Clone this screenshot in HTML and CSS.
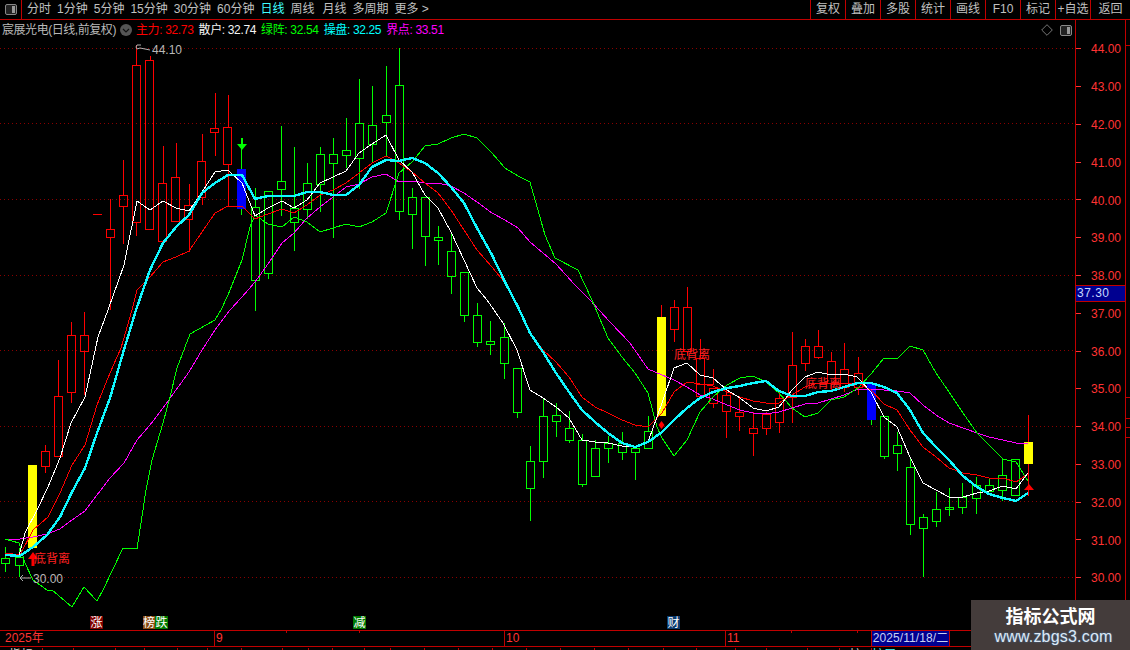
FILE: index.html
```html
<!DOCTYPE html>
<html lang="zh">
<head>
<meta charset="utf-8">
<title>宸展光电</title>
<link rel="stylesheet" href="styles.css">
</head>
<body>
<div class="app">
  <header class="toolbar">
    <div class="toggle-cell">
      <svg class="layout-icon" viewBox="0 0 12 11"><rect x="0.5" y="0.5" width="11" height="10" rx="1.5" class="li-frame"/><rect x="7" y="2" width="3" height="7" class="li-fill"/></svg>
    </div>
    <nav class="periods">
      <span>分时</span><span>1分钟</span><span>5分钟</span><span>15分钟</span><span>30分钟</span><span>60分钟</span><span class="active">日线</span><span>周线</span><span class="wide">月线</span><span>多周期</span><span>更多 &gt;</span>
    </nav>
    <nav class="actions">
      <span>复权</span><span>叠加</span><span>多股</span><span>统计</span><span>画线</span><span>F10</span><span>标记</span><span>+自选</span><span>返回</span>
    </nav>
  </header>

  <main class="main">
    <section class="chart">
      <div class="legend">
        <span class="stock">宸展光电(日线,前复权)</span>
        <svg class="chev" viewBox="0 0 12 12"><circle cx="6" cy="6" r="6" fill="#555"/><path d="M3 5l3 3 3-3" fill="none" stroke="#111" stroke-width="1.2"/></svg>
        <span class="val c-red">主力: 32.73</span>
        <span class="val c-white">散户: 32.74</span>
        <span class="val c-green">绿阵: 32.54</span>
        <span class="val c-cyan">操盘: 32.25</span>
        <span class="val c-mag">界点: 33.51</span>
      </div>
      <div class="corner-icons">
        <svg class="diamond" viewBox="0 0 12 12"><path d="M6 .7L11.3 6 6 11.3.7 6z" fill="none" stroke="#777"/></svg>
        <svg class="layout-icon" viewBox="0 0 12 11"><rect x="0.5" y="0.5" width="11" height="10" rx="1.5" class="li-frame"/><rect x="7" y="2" width="3" height="7" class="li-fill"/></svg>
      </div>
      <svg class="plot" viewBox="0 20 1075 610" width="1075" height="610">
        <path class="grid" d="M0 48.5H1075M0 123.5H1075M0 199.5H1075M0 275.5H1075M0 350.5H1075M0 426.5H1075M0 501.5H1075M0 577.5H1075"/>

        <!-- green candles -->
        <g class="crisp up-green">
          <path class="wick" d="M5.5 547V558M5.5 563V572M19.5 548V557M19.5 566V577M241.5 138V215M255.5 188V207M255.5 280V311M268.5 273V279M281.5 126V181M281.5 190V216M294.5 147V208M294.5 222V251M307.5 163V183M307.5 209V219M320.5 147V154M320.5 184V212M333.5 138V154M333.5 163V238M346.5 118V150M346.5 156V168M359.5 79V123M359.5 159V189M372.5 86V125M372.5 145V163M386.5 66V115M386.5 123V157M399.5 48V85M399.5 212V220M412.5 188V197M412.5 215V249M425.5 237V266M438.5 226V237M438.5 241V265M451.5 233V251M451.5 277V294M464.5 315V322M477.5 303V315M477.5 343V347M490.5 321V341M490.5 345V355M504.5 323V337M504.5 363V379M517.5 413V418M530.5 446V461M530.5 488V521M543.5 399V416M543.5 462V478M556.5 403V415M556.5 421V437M569.5 411V428M569.5 441V443M582.5 434V440M582.5 485V487M595.5 440V448M608.5 436V443M608.5 448V463M622.5 432V443M622.5 453V460M635.5 447V448M635.5 453V480M648.5 416V431M871.5 419V425M884.5 457V459M897.5 432V445M897.5 454V471M910.5 458V467M910.5 524V535M923.5 514V517M923.5 529V577M936.5 492V509M936.5 521V527M949.5 488V516M962.5 483V498M962.5 508V514M976.5 477V485M976.5 498V514M989.5 479V485M1002.5 459V475M1002.5 491V501"/>
          <path class="body" d="M1.5 558.5h8v5h-8zM15.5 557.5h8v8h-8zM251.5 207.5h8v73h-8zM264.5 191.5h8v82h-8zM277.5 181.5h8v8h-8zM290.5 208.5h8v14h-8zM303.5 183.5h8v26h-8zM316.5 154.5h8v30h-8zM329.5 154.5h8v9h-8zM342.5 150.5h8v5h-8zM355.5 123.5h8v35h-8zM368.5 125.5h8v19h-8zM382.5 115.5h8v7h-8zM395.5 85.5h8v126h-8zM408.5 197.5h8v17h-8zM421.5 197.5h8v39h-8zM434.5 237.5h8v3h-8zM447.5 251.5h8v25h-8zM460.5 272.5h8v43h-8zM473.5 315.5h8v27h-8zM486.5 341.5h8v3h-8zM500.5 337.5h8v26h-8zM513.5 368.5h8v44h-8zM526.5 461.5h8v27h-8zM539.5 416.5h8v45h-8zM552.5 415.5h8v6h-8zM565.5 428.5h8v12h-8zM578.5 440.5h8v44h-8zM591.5 448.5h8v28h-8zM604.5 443.5h8v5h-8zM618.5 443.5h8v9h-8zM631.5 448.5h8v4h-8zM644.5 431.5h8v17h-8zM880.5 416.5h8v40h-8zM893.5 445.5h8v8h-8zM906.5 467.5h8v57h-8zM919.5 517.5h8v11h-8zM932.5 509.5h8v12h-8zM958.5 497.5h8v10h-8zM972.5 485.5h8v13h-8zM985.5 485.5h8v6h-8zM998.5 475.5h8v15h-8zM1011.5 459.5h8v36h-8zM945.5 507.5h8v2h-8z"/>
        </g>
        <!-- red candles -->
        <g class="crisp up-red">
          <path class="wick" d="M45.5 445V451M45.5 467V473M58.5 360V396M71.5 322V335M71.5 393V403M84.5 312V335M84.5 351V395M110.5 199V229M110.5 237V310M123.5 160V195M123.5 207V244M136.5 45V65M136.5 223V236M150.5 56V60M163.5 146V183M176.5 143V177M189.5 184V205M189.5 220V252M202.5 134V161M202.5 197V205M215.5 93V128M215.5 133V156M228.5 95V127M228.5 165V206M661.5 305V317M674.5 300V307M674.5 329V342M687.5 287V307M687.5 352V356M700.5 339V358M700.5 397V398M713.5 369V384M713.5 403V408M726.5 387V395M726.5 412V438M739.5 398V412M739.5 417V431M753.5 412V428M753.5 433V456M766.5 412V415M766.5 428V435M779.5 392V398M779.5 423V433M792.5 332V366M792.5 397V423M805.5 339V346M805.5 363V371M818.5 330V346M818.5 357V359M831.5 352V361M831.5 383V390M844.5 343V369M844.5 387V392M858.5 357V373M858.5 387V395M1028.5 415V442M1028.5 464V496"/>
          <path class="body" d="M41.5 451.5h8v15h-8zM54.5 396.5h8v60h-8zM67.5 335.5h8v57h-8zM80.5 335.5h8v16h-8zM106.5 229.5h8v8h-8zM119.5 195.5h8v11h-8zM132.5 65.5h8v157h-8zM145.5 60.5h8v169h-8zM158.5 183.5h8v58h-8zM171.5 177.5h8v44h-8zM184.5 205.5h8v14h-8zM197.5 161.5h8v36h-8zM210.5 128.5h8v4h-8zM223.5 127.5h8v37h-8zM670.5 307.5h8v22h-8zM683.5 307.5h8v44h-8zM696.5 358.5h8v38h-8zM709.5 388.5h8v15h-8zM696.5 384.5h17M722.5 395.5h8v16h-8zM735.5 412.5h8v4h-8zM749.5 428.5h8v5h-8zM762.5 414.5h8v14h-8zM775.5 398.5h8v24h-8zM788.5 365.5h8v32h-8zM801.5 346.5h8v17h-8zM814.5 346.5h8v11h-8zM827.5 361.5h8v22h-8zM840.5 369.5h8v18h-8zM854.5 373.5h8v14h-8z"/>
          <path class="dash" d="M93 214.5H102"/>
        </g>

        <!-- yellow / blue bars -->
        <rect class="yellow" x="28" y="465" width="9" height="83"/>
        <rect class="yellow" x="657" y="317" width="9" height="99"/>
        <rect class="yellow" x="1024" y="442" width="9" height="22"/>
        <rect class="blue" x="237" y="169" width="9" height="40"/>
        <rect class="blue" x="867" y="383" width="9" height="37"/>

        <!-- indicator lines -->
        <polyline class="ln ln-mag" points="5,539 20,539 33,537 47,534 60,529 72,520 85,511 97,495 110,478 124,463 137,440 150,425 163,408 176,390 189,372 202,350 215,330 230,310 242,297 255,282 268,264 282,243 294,233 307,218 320,207 333,197 346,187 359,184 372,177 386,174 399,182 412,181 425,183 438,183 451,186 464,193 477,202 492,213 505,220 518,228 530,242 556,264 575,285 590,300 610,322 630,343 648,369 662,375 674,380 687,387 700,395 713,399 727,405 740,410 753,413 766,414 779,412 792,408 805,404 818,403 831,399 844,395 858,389 871,389 884,390 897,391 910,393 923,405 936,415 949,423 963,428 977,433 989,437 1003,440 1016,443 1028,444"/>
        <polyline class="ln ln-green" points="5,539 19,543 25,563 33,580 47,590 52,590 72,607 82,590 84,587 97,601 103,590 123,548 137,549 146,490 152,460 163,423 170,397 177,368 190,334 215,320 221,310 228,295 242,260 250,227 255,215 268,224 282,227 294,217 307,222 320,232 333,228 346,224 359,227 372,222 386,213 399,173 412,162 425,146 438,144 451,138 464,134 477,138 492,153 505,168 518,176 530,182 545,235 555,258 578,270 592,300 608,338 622,357 635,373 648,393 657,427 662,438 674,456 687,440 700,412 713,397 727,385 740,378 753,376 766,382 779,393 792,408 805,417 818,413 831,400 844,397 858,388 871,374 884,358 897,359 910,346 923,350 936,373 949,392 963,413 977,433 989,445 1003,459 1016,462 1028,481"/>
        <polyline class="ln ln-red" points="5,553 20,555 33,530 48,517 60,493 72,465 85,445 97,405 110,373 121,348 132,310 137,290 150,277 163,262 176,257 189,251 202,232 215,213 228,206 242,206 255,219 268,214 282,209 294,213 307,205 320,195 333,190 346,183 359,173 372,163 386,156 399,163 412,172 425,183 438,193 451,210 464,230 477,250 492,267 505,283 515,300 530,333 543,350 556,362 569,377 582,397 595,407 608,413 622,420 635,425 648,427 662,413 674,392 687,382 700,384 713,386 727,392 740,397 753,401 766,403 779,403 792,395 805,387 818,383 831,383 844,383 858,383 871,390 884,404 897,410 910,430 923,447 936,457 949,468 963,473 977,475 989,478 1003,478 1016,482 1028,474"/>
        <polyline class="ln ln-white" points="19,556 25,533 37,510 48,487 60,458 71,423 85,397 98,337 108,310 124,265 137,201 150,210 163,201 176,208 189,211 202,192 215,172 228,170 242,183 255,216 268,208 282,201 294,208 307,200 320,183 333,177 346,171 359,153 372,144 386,135 399,160 412,172 425,195 438,208 451,232 464,260 477,288 487,300 503,323 517,350 530,390 543,398 556,407 569,418 582,440 595,442 608,443 622,446 635,447 648,442 662,403 674,368 687,363 700,375 713,378 727,390 740,398 753,408 766,411 779,407 792,390 805,377 818,372 831,375 844,374 857,377 871,392 884,417 897,427 910,457 923,483 936,490 949,497 963,497 977,493 989,491 1003,486 1016,489 1028,473"/>
        <polyline class="ln ln-cyan" points="5,555 20,556 33,547 47,535 60,517 72,492 85,468 97,433 110,398 123,353 136,310 150,270 163,243 176,227 189,215 202,193 215,183 228,175 242,175 255,199 268,196 282,196 294,196 307,192 320,192 333,195 346,195 359,185 372,167 386,160 399,161 412,158 425,163 438,173 451,187 464,203 477,228 492,255 505,282 518,307 530,333 543,352 556,373 569,392 582,410 595,422 608,433 622,443 635,447 648,442 662,432 674,420 687,408 700,398 713,392 727,388 740,386 753,383 766,381 779,391 792,396 805,396 818,392 831,391 844,387 858,383 871,383 884,387 897,393 910,410 923,433 936,447 949,460 963,476 977,487 989,494 1003,498 1016,501 1028,493"/>

        <!-- signals -->
        <path class="sig-green" d="M237 144H247L242 150zM241 138h2v6h-2z"/>
        <path class="sig-red" d="M33 552L28 559H31.5V566H34.5V559H38zM661.5 421L658.5 425 661.5 429 664.5 425zM1029 484L1024 490H1034z"/>
        <path class="mark" d="M137 45h4M137 45l-1 2 1 2 3-1 10 2"/>
        <path class="mark" d="M20 578H31M20 578l3-3M20 578l3 3"/>
        <text class="price-mark" x="152" y="54">44.10</text>
        <text class="price-mark" x="33" y="583">30.00</text>
        <text class="sig-text" x="34" y="563">底背离</text>
        <text class="sig-text" x="674" y="359">底背离</text>
        <text class="sig-text" x="805" y="388">底背离</text>

        <!-- event flags -->
        <g class="crisp">
          <rect class="f-red" x="90" y="616" width="13" height="13"/>
          <rect class="f-brown" x="143" y="616" width="12" height="13"/>
          <rect class="f-green" x="155" y="616" width="13" height="13"/>
          <rect class="f-green" x="353" y="616" width="13" height="13"/>
          <rect class="f-navy" x="667" y="616" width="13" height="13"/>
        </g>
        <text class="flag" x="90.5" y="627">涨</text>
        <text class="flag" x="143" y="627">榜</text>
        <text class="flag" x="155.5" y="627">跌</text>
        <text class="flag" x="353.5" y="627">减</text>
        <text class="flag" x="667.5" y="627">财</text>
      </svg>
    </section>

    <aside class="axis">
      <div class="tick">44.00</div>
      <div class="tick">43.00</div>
      <div class="tick">42.00</div>
      <div class="tick">41.00</div>
      <div class="tick">40.00</div>
      <div class="tick">39.00</div>
      <div class="tick">38.00</div>
      <div class="tick">37.00</div>
      <div class="tick">36.00</div>
      <div class="tick">35.00</div>
      <div class="tick">34.00</div>
      <div class="tick">33.00</div>
      <div class="tick">32.00</div>
      <div class="tick">31.00</div>
      <div class="tick">30.00</div>
      <div class="cursor-price">37.30</div>
    </aside>
    <div class="rail">
      <i class="rm rm1"></i><i class="rm rm2"></i><i class="rm rm3"></i><i class="rm rm4"></i><i class="rm rm5"></i>
    </div>
  </main>

  <footer class="dates">
    <span class="d d-year">2025年</span>
    <span class="d d-sep">9</span>
    <span class="d d-oct">10</span>
    <span class="d d-nov">11</span>
    <span class="d-active">2025/11/18/二</span>
    <i class="dt dt1"></i><i class="dt dt2"></i><i class="dt dt3"></i><i class="dt dt4"></i>
  </footer>

  <div class="tabs">
    <span>指标</span><span>A</span><span></span><span></span><span></span><span></span><span></span><span></span><span></span><span></span><span></span><span></span><span></span><span></span><span></span><span></span><span></span><span></span><span></span><span></span><span></span><span></span><span></span><span></span><span></span><span>扩</span><span class="tab-cyan">扩展</span>
  </div>

  <div class="watermark">
    <div class="wm-title">指标公式网</div>
    <div class="wm-url">www.zbgs3.com</div>
  </div>
</div>
</body>
</html>
```
FILE: styles.css
```css
* { box-sizing: border-box; }
html, body { margin: 0; padding: 0; background: #000; }
body { font-family: "Liberation Sans", "Noto Sans CJK SC", sans-serif; font-size: 12px; color: #c0c0c0; }
.app { position: relative; width: 1130px; height: 650px; overflow: hidden; display: flex; flex-direction: column; background: #000; }

/* toolbar */
.toolbar { height: 20px; flex: none; display: flex; border-bottom: 1px solid #c00000; line-height: 19px; white-space: nowrap; }
.toggle-cell { width: 22px; border-right: 1px solid #c00000; display: flex; align-items: center; justify-content: center; }
.layout-icon { width: 12px; height: 11px; display: block; }
.li-frame { fill: #222; stroke: #888; }
.li-fill { fill: #999; }
.periods { display: flex; gap: 6px; padding-left: 5px; flex: 1; font-size: 12px; }
.periods .active { color: #40ffff; }
.periods .wide { margin-left: 2px; }
.actions { display: flex; width: 320px; }
.actions span { width: 35px; border-left: 1px solid #c00000; text-align: center; }
.actions span:last-child { width: 40px; }

/* main */
.main { flex: none; height: 610px; display: flex; }
.chart { position: relative; width: 1075px; height: 610px; flex: none; overflow: hidden; }
.plot { display: block; position: absolute; left: 0; top: 0; }
.legend { position: absolute; z-index: 2; left: 2px; top: 2px; display: flex; align-items: center; gap: 5px; line-height: 16px; white-space: nowrap; }
.stock { color: #b8b8b8; letter-spacing: -.45px; margin-right: -1px; }
.chev { width: 12px; height: 12px; flex: none; margin-right: -1px; }
.val { letter-spacing: -.35px; }
.c-red { color: #ff0000; }
.c-white { color: #f4f4f4; }
.c-green { color: #00ff00; }
.c-cyan { color: #00ffff; }
.c-mag { color: #ff00ff; }
.corner-icons { position: absolute; z-index: 2; right: 3px; top: 4px; display: flex; align-items: center; gap: 7px; }
.diamond { width: 12px; height: 12px; display: block; }

.grid { stroke: #8a0000; stroke-width: 1; stroke-dasharray: 1 3; fill: none; shape-rendering: crispEdges; }
.crisp { shape-rendering: crispEdges; }
.wick, .dash, .body { fill: none; stroke-width: 1; }
.up-green .wick, .up-green .body { stroke: #00ff00; }
.up-red .wick, .up-red .body, .dash { stroke: #ff0000; }
.yellow { fill: #ffff00; shape-rendering: crispEdges; }
.blue { fill: #0000ff; shape-rendering: crispEdges; }
.ln { fill: none; stroke-linejoin: round; shape-rendering: crispEdges; }
.ln-mag { stroke: #ff00ff; stroke-width: 1; }
.ln-green { stroke: #00ff00; stroke-width: 1; }
.ln-red { stroke: #ff0000; stroke-width: 1; }
.ln-white { stroke: #ffffff; stroke-width: 1; }
.ln-cyan { stroke: #10f8ff; stroke-width: 2.4; }
.sig-green { fill: #00ff00; }
.sig-red { fill: #ff0000; }
.mark { fill: none; stroke: #b0b0b0; stroke-width: 1; }
.price-mark { fill: #b8b8b8; font-size: 12px; }
.sig-text { fill: #ff2020; font-size: 12px; }
.flag { fill: #fff; font-size: 12px; }
.f-red { fill: #800000; }
.f-brown { fill: #8b4a10; }
.f-green { fill: #007a00; }
.f-navy { fill: #0a3a6e; }

/* price axis */
.axis { position: relative; width: 51px; flex: none; border-left: 1px solid #c00000; border-right: 1px solid #c00000; padding-top: 9.4px; color: #ff3333; font-size: 12px; }
.tick { position: relative; height: 37.79px; line-height: 37.79px; padding: 2px 0 0 15px; }
.tick::before { content: ""; position: absolute; left: 0; top: 50%; width: 5px; height: 1px; background: #ff3333; }
.cursor-price { position: absolute; left: -1px; top: 265px; width: 51px; height: 17px; line-height: 15px; background: #000090; border: 1px solid #c00000; color: #c8d8ff; padding-left: 1px; letter-spacing: .5px; font-size: 12px; }

/* narrow strip at the right edge */
.rail { position: relative; flex: 1; }
.rm { position: absolute; left: 0; width: 4px; height: 1px; background: #c00000; }
.rm1 { top: 25px; } .rm2 { top: 377px; } .rm3 { top: 398px; } .rm4 { top: 407px; } .rm5 { top: 417px; }

/* date axis */
.dates { position: relative; flex: none; height: 17px; border-top: 1px solid #c00000; border-bottom: 1px solid #c00000; color: #ff3333; line-height: 15px; }
.d { position: absolute; top: 0; height: 15px; border-left: 1px solid #c00000; padding-left: 1px; }
.d-year { left: 5px; border-left: 0; padding-left: 0; }
.d-sep { left: 214px; }
.d-oct { left: 504px; }
.d-nov { left: 725px; }
.d-active { position: absolute; left: 871px; top: 0; width: 79px; height: 15px; background: #000090; color: #c8d0f0; text-align: center; border-left: 1px solid #c00000; border-right: 1px solid #c00000; letter-spacing: .1px; white-space: nowrap; }
.dt { position: absolute; top: 0; width: 1px; height: 2px; background: #c00000; }
.dt1 { left: 286px; } .dt2 { left: 359px; } .dt3 { left: 791px; } .dt4 { left: 857px; }

/* bottom tabs, cut off by the window */
.tabs { flex: none; height: 20px; display: grid; grid-template-columns: 43px 31px 42px 29px 33px 30px 34px 41px 26px 24px 32px 26px 34px 34px 34px 34px 34px 34px 34px 35px 33px 39px 31px 41px 32px 32px 1fr; padding-top: 1px; color: #d8d8d8; font-size: 12px; line-height: 14px; white-space: nowrap; }
.tabs span { border-right: 1px solid #c00000; text-align: center; overflow: hidden; }
.tabs span:last-child { border-right: 0; text-align: left; }
.tabs .tab-cyan { color: #40ffff; }

/* watermark */
.watermark { position: absolute; right: 0; bottom: 0; width: 159px; height: 50px; background: #443c3b; text-align: center; z-index: 5; }
.wm-title { color: #fff; font-family: "Noto Sans CJK SC", sans-serif; font-size: 18px; font-weight: 700; line-height: 30px; }
.wm-url { color: #dce8f4; font-family: "Liberation Sans", sans-serif; font-size: 16px; line-height: 14px; letter-spacing: .2px; padding-left: 6px; text-shadow: 0 0 2px #4a7ab0; }
```
